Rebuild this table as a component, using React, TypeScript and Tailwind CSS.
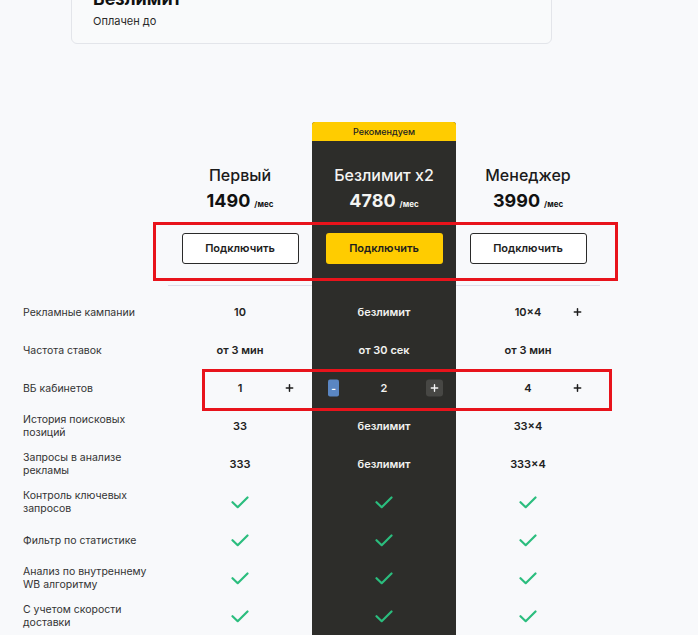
import { Plus } from 'lucide-react';

type Cell =
  | { kind: 'text'; value: string; plus?: boolean }
  | { kind: 'check' }
  | { kind: 'stepper'; value: string };

interface Row {
  label: string;
  cells: [Cell, Cell, Cell];
}

const rows: Row[] = [
  {
    label: 'Рекламные кампании',
    cells: [
      { kind: 'text', value: '10' },
      { kind: 'text', value: 'безлимит' },
      { kind: 'text', value: '10×4', plus: true },
    ],
  },
  {
    label: 'Частота ставок',
    cells: [
      { kind: 'text', value: 'от 3 мин' },
      { kind: 'text', value: 'от 30 сек' },
      { kind: 'text', value: 'от 3 мин' },
    ],
  },
  {
    label: 'ВБ кабинетов',
    cells: [
      { kind: 'text', value: '1', plus: true },
      { kind: 'stepper', value: '2' },
      { kind: 'text', value: '4', plus: true },
    ],
  },
  {
    label: 'История поисковых позиций',
    cells: [
      { kind: 'text', value: '33' },
      { kind: 'text', value: 'безлимит' },
      { kind: 'text', value: '33×4' },
    ],
  },
  {
    label: 'Запросы в анализе рекламы',
    cells: [
      { kind: 'text', value: '333' },
      { kind: 'text', value: 'безлимит' },
      { kind: 'text', value: '333×4' },
    ],
  },
  { label: 'Контроль ключевых запросов', cells: [{ kind: 'check' }, { kind: 'check' }, { kind: 'check' }] },
  { label: 'Фильтр по статистике', cells: [{ kind: 'check' }, { kind: 'check' }, { kind: 'check' }] },
  { label: 'Анализ по внутреннему WB алгоритму', cells: [{ kind: 'check' }, { kind: 'check' }, { kind: 'check' }] },
  { label: 'С учетом скорости доставки', cells: [{ kind: 'check' }, { kind: 'check' }, { kind: 'check' }] },
];

const plans = [
  { name: 'Первый', price: '1490', featured: false },
  { name: 'Безлимит x2', price: '4780', featured: true },
  { name: 'Менеджер', price: '3990', featured: false },
];

function Check() {
  return (
    <svg width="18" height="13" viewBox="0 0 18 13" fill="none">
      <path d="M1.5 6.2l5.2 5 9.8-9.7" stroke="#2bbd7e" strokeWidth="2.2" strokeLinecap="round" strokeLinejoin="round" />
    </svg>
  );
}

function ValueCell({ cell, dark }: { cell: Cell; dark: boolean }) {
  if (cell.kind === 'check') {
    return <Check />;
  }
  if (cell.kind === 'stepper') {
    return (
      <>
        <span className="absolute left-[16px] top-1/2 -translate-y-1/2 w-[11px] h-[17px] rounded-[2px] bg-[#5a86c2] text-white text-[10px] font-bold leading-[17px] text-center">
          -
        </span>
        <span className="text-[11px] font-semibold text-[#f2f2f0]">{cell.value}</span>
        <span className="absolute right-[13px] top-1/2 -translate-y-1/2 w-[17px] h-[17px] rounded-[3px] bg-[#474744] flex items-center justify-center">
          <Plus size={11} strokeWidth={3} color="#f4f4f4" />
        </span>
      </>
    );
  }
  return (
    <>
      <span className={`text-[11px] font-semibold ${dark ? 'text-[#f2f2f0]' : 'text-[#222]'}`}>{cell.value}</span>
      {cell.plus && (
        <span className="absolute right-[17px] top-1/2 -translate-y-1/2 flex items-center justify-center">
          <Plus size={11} strokeWidth={3.2} color="#1d1d1d" />
        </span>
      )}
    </>
  );
}

export default function App() {
  return (
    <div
      className="relative min-h-[635px] w-full overflow-hidden bg-[#f8f9fb] text-[#222]"
      style={{ fontFamily: 'Inter, "Noto Sans", sans-serif' }}
    >
      {/* текущий тариф */}
      <div className="ml-[71px] mt-[-29px] w-[481px] rounded-[6px] border border-[#e3e5ea] bg-[#f9fafb] px-[21px] pt-[16px] pb-[15px]">
        <div className="text-[18px] font-bold leading-[22px] text-[#111]">Безлимит</div>
        <div className="mt-[4px] text-[11px] leading-[14px] text-[#2a2a2a]">Оплачен до</div>
      </div>

      {/* тарифы */}
      <div className="mt-[78px] w-[600px]">
        <div className="grid grid-cols-[168px_144px_144px_144px]">
          <div />
          {plans.map((p) => (
            <div
              key={p.name}
              className={`flex flex-col items-center ${p.featured ? 'rounded-t-[3px] bg-[#2d2d2a]' : 'pt-[19px]'}`}
            >
              {p.featured && (
                <div className="h-[19px] w-full rounded-t-[3px] bg-[#ffcc00] text-center text-[9px] font-medium leading-[19px] text-[#222]">
                  Рекомендуем
                </div>
              )}
              <div
                className={`mt-[24px] text-[16px] font-medium leading-[20px] ${p.featured ? 'text-[#f4f4f2]' : 'text-[#1b1b1b]'}`}
              >
                {p.name}
              </div>
              <div className={`mt-[5px] flex items-baseline leading-[22px] ${p.featured ? 'text-[#f4f4f2]' : 'text-[#111]'}`}>
                <span className="text-[18px] font-bold">{p.price}</span>
                <span className="ml-[4px] text-[8px] font-bold">/мес</span>
              </div>
              <button
                className={`mt-[18px] h-[31px] w-[117px] rounded-[3px] text-[11px] font-semibold ${
                  p.featured
                    ? 'bg-[#ffcc00] text-[#1d1d1d]'
                    : 'border border-[#2a2a2a] bg-white text-[#1d1d1d]'
                }`}
              >
                Подключить
              </button>
              <div className={`mt-[21px] h-[1px] w-full ${p.featured ? 'bg-transparent' : 'bg-[#dcdde8]'}`} />
              <div className="h-[7px]" />
            </div>
          ))}
        </div>

        {rows.map((row) => (
          <div key={row.label} className="grid h-[38px] grid-cols-[168px_144px_144px_144px]">
            <div className="flex items-center pl-[23px] pr-[20px] text-[10.5px] leading-[13px] text-[#333]">
              {row.label}
            </div>
            {row.cells.map((cell, i) => (
              <div
                key={i}
                className={`relative flex items-center justify-center ${i === 1 ? 'bg-[#2d2d2a]' : ''}`}
              >
                <ValueCell cell={cell} dark={i === 1} />
              </div>
            ))}
          </div>
        ))}
      </div>

      {/* пометки на скриншоте */}
      <div className="pointer-events-none absolute left-[153px] top-[222px] h-[59px] w-[465px] border-[3px] border-[#e8131b]" />
      <div className="pointer-events-none absolute left-[202px] top-[369px] h-[42px] w-[410px] border-[3px] border-[#e8131b]" />
    </div>
  );
}
